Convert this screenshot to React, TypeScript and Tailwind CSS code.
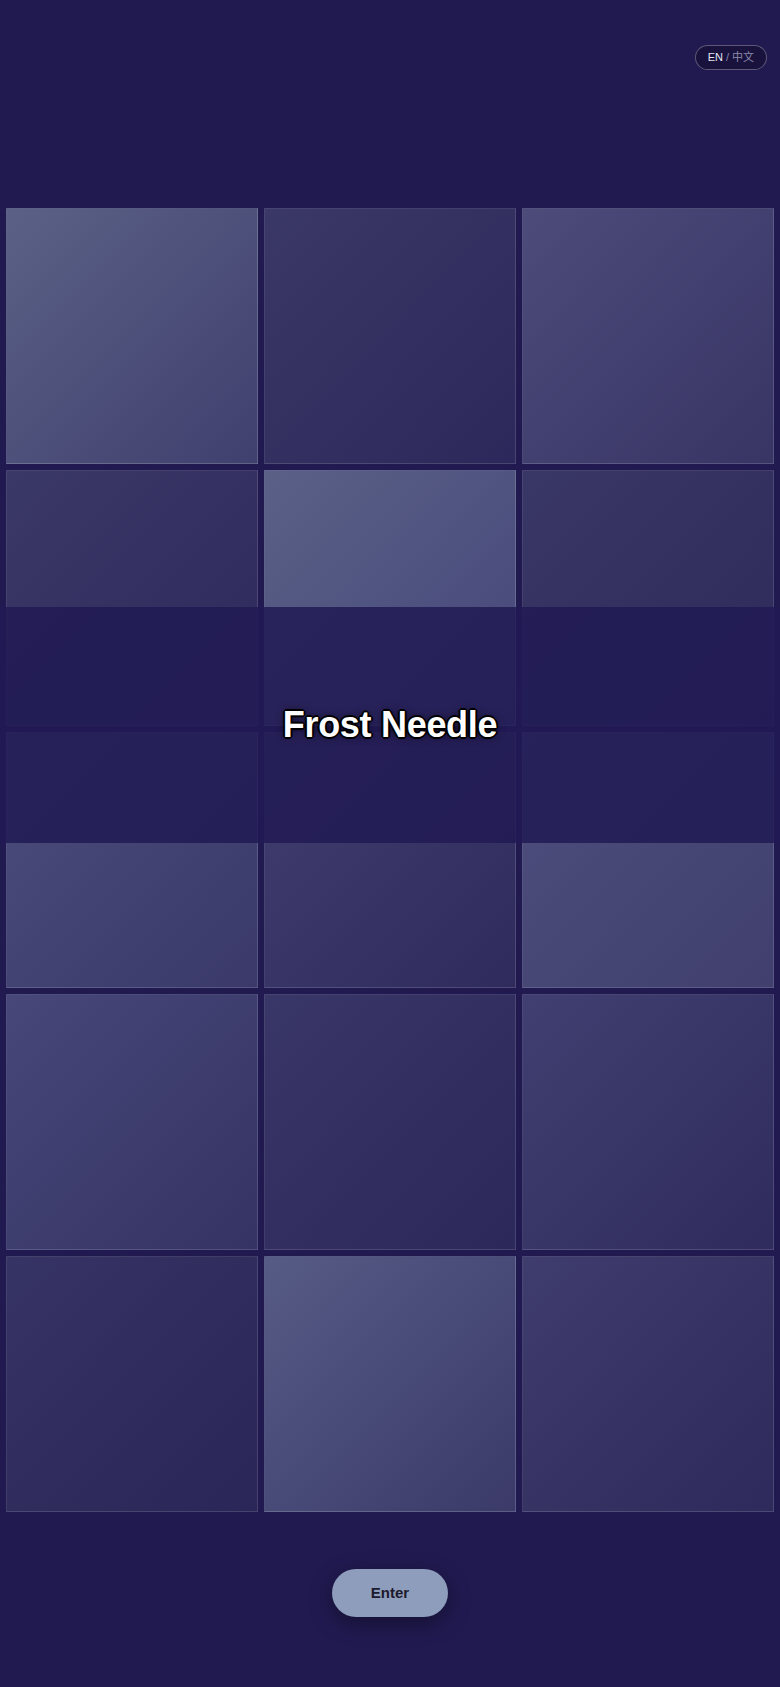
import { useState } from 'react';

// each tile: full gradient classes, written out so tailwind picks them up
const tiles = [
  'from-[#5b6186] to-[#40406e]',
  'from-[#3a3866] to-[#2d285b]',
  'from-[#4c4b7a] to-[#383565]',

  'from-[#3a3867] to-[#2e2a5c]',
  'from-[#5a6086] to-[#46477a]',
  'from-[#393766] to-[#2e2a5b]',

  'from-[#4b4d7b] to-[#3a396a]',
  'from-[#413f6f] to-[#2f2b5d]',
  'from-[#4e4f7e] to-[#403f6e]',

  'from-[#47477a] to-[#353363]',
  'from-[#393767] to-[#2c285a]',
  'from-[#413f71] to-[#2f2b5d]',

  'from-[#363464] to-[#2a2657]',
  'from-[#565b85] to-[#3b3a69]',
  'from-[#3f3d6d] to-[#2e2a5b]',
];

export default function App() {
  const [lang, setLang] = useState<'en' | 'zh'>('en');

  return (
    <div className="min-h-[1687px] w-full bg-[#211a51] flex flex-col font-['Liberation_Sans',Arial,sans-serif]">
      {/* Language toggle */}
      <div className="flex justify-end pt-[45px] pr-[13px]">
        <button
          onClick={() => setLang(lang === 'en' ? 'zh' : 'en')}
          className="h-[25px] px-3 rounded-full border border-white/30 bg-[#18123d] text-[11px] leading-none flex items-center font-['Liberation_Sans','Noto_Sans_CJK_SC',sans-serif]"
        >
          <span className={lang === 'en' ? 'text-[#e6e6f2]' : 'text-[#8c89aa]'}>EN</span>
          <span className="text-[#8c89aa] mx-[3px]">/</span>
          <span className={lang === 'zh' ? 'text-[#e6e6f2]' : 'text-[#8c89aa]'}>中文</span>
        </button>
      </div>

      {/* Tile grid with title band */}
      <div className="relative mt-[138px] px-[6px]">
        <div className="grid grid-cols-3 gap-[6px]">
          {tiles.map((c, i) => (
            <div
              key={i}
              className={'h-[256px] border border-white/10 bg-linear-to-br ' + c}
            />
          ))}
        </div>

        <div className="absolute left-0 right-0 top-[399px] h-[236px] bg-[#211a53]/85 flex items-center justify-center">
          <h1 className="text-white text-[36px] font-bold leading-none tracking-[-0.3px] [text-shadow:0_0_1px_#000,2px_0_0_#000,-2px_0_0_#000,0_2px_0_#000,0_-2px_0_#000,1px_1px_0_#000,-1px_-1px_0_#000,1px_-1px_0_#000,-1px_1px_0_#000,0_0_8px_rgba(0,0,0,0.7)]">
            Frost Needle
          </h1>
        </div>
      </div>

      {/* Enter */}
      <div className="flex justify-center mt-[57px]">
        <button className="w-[116px] h-[48px] rounded-full bg-[#8e9dbb] text-[#1c1a2e] text-[15px] font-bold shadow-[0_6px_22px_rgba(0,0,0,0.4)]">
          Enter
        </button>
      </div>
    </div>
  );
}
